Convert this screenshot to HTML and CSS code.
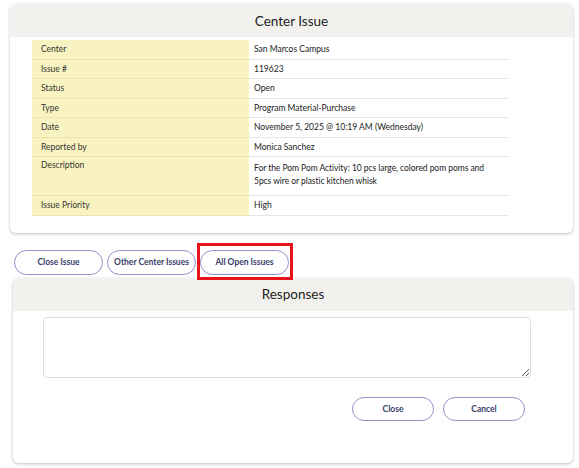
FILE: index.html
```html
<!DOCTYPE html>
<html>
<head>
<meta charset="utf-8">
<link rel="stylesheet" href="styles.css">
</head>
<body>
<div class="card issue-card">
  <div class="card-header">Center Issue</div>
  <div class="card-body">
    <div class="details">
      <div class="row"><div class="label">Center</div><div class="value">San Marcos Campus</div></div>
      <div class="row"><div class="label">Issue #</div><div class="value">119623</div></div>
      <div class="row"><div class="label">Status</div><div class="value">Open</div></div>
      <div class="row"><div class="label">Type</div><div class="value">Program Material-Purchase</div></div>
      <div class="row"><div class="label">Date</div><div class="value">November 5, 2025 @ 10:19 AM (Wednesday)</div></div>
      <div class="row"><div class="label">Reported by</div><div class="value">Monica Sanchez</div></div>
      <div class="row tall"><div class="label">Description</div><div class="value">For the Pom Pom Activity: 10 pcs large, colored pom poms and 5pcs wire or plastic kitchen whisk</div></div>
      <div class="row last"><div class="label">Issue Priority</div><div class="value">High</div></div>
    </div>
  </div>
</div>

<div class="actions">
  <button class="pill">Close Issue</button>
  <button class="pill">Other Center Issues</button>
  <button class="pill highlighted">All Open Issues</button>
</div>

<div class="card responses-card">
  <div class="card-header">Responses</div>
  <div class="responses-body">
    <textarea class="response-input"></textarea>
    <div class="form-actions">
      <button class="pill wide">Close</button>
      <button class="pill wide">Cancel</button>
    </div>
  </div>
</div>
</body>
</html>
```

FILE: styles.css
```css
html, body {
  margin: 0;
  padding: 0;
  background: #ffffff;
}

body {
  font-family: Lato, "Noto Sans", "Liberation Sans", sans-serif;
  color: #222;
  width: 579px;
  height: 468px;
  overflow: hidden;
}

.card {
  background: #fff;
  border-radius: 6px;
  box-shadow: 0 1px 3px rgba(60, 60, 90, 0.35);
  overflow: hidden;
}

.issue-card {
  margin: 4px 6px 0 10px;
}

.card-header {
  background: #f2f1ee;
  height: 33px;
  display: flex;
  align-items: center;
  justify-content: center;
  font-size: 13.5px;
  color: #1e1e1e;
}

.card-body {
  padding: 3px 64px 17px 22px;
}

.details {
  display: flex;
  flex-direction: column;
}

.row {
  display: grid;
  grid-template-columns: 217px 1fr;
  font-size: 8.5px;
  line-height: 11.5px;
}

.label {
  background: #f8f3c1;
  padding: 4px 9px 3px;
  color: #333;
  border-bottom: 1px solid #ebe3b0;
}

.value {
  padding: 4px 5px 3px;
  color: #222;
  border-bottom: 1px solid #e6e6e6;
}

.row.tall .label {
  padding-top: 3px;
  padding-bottom: 23.5px;
}

.row.tall .value {
  padding-top: 5px;
  padding-bottom: 8px;
  padding-right: 15px;
  line-height: 12.5px;
  letter-spacing: -0.05px;
}

.actions {
  display: flex;
  gap: 4px;
  margin: 17px 0 0 14px;
}

.pill {
  font-family: inherit;
  background: #fff;
  border: 1px solid #8f93c6;
  border-radius: 13px;
  height: 25px;
  width: 89px;
  padding: 0;
  font-size: 8.5px;
  font-weight: 700;
  color: #383d69;
  cursor: pointer;
}

.highlighted {
  position: relative;
}

.highlighted::after {
  content: "";
  position: absolute;
  left: -4px;
  right: -5px;
  top: -8px;
  bottom: -6px;
  border: 3px solid #e8141c;
  pointer-events: none;
}

.responses-card {
  margin: 3px 6px 0 13px;
}

.responses-body {
  padding: 6px 42px 42px 30px;
  display: flex;
  flex-direction: column;
}

.response-input {
  height: 61px;
  box-sizing: border-box;
  border: 1px solid #dedde3;
  border-radius: 4px;
  resize: vertical;
  margin: 0;
  font-family: inherit;
}

.form-actions {
  display: flex;
  justify-content: flex-end;
  gap: 9px;
  margin-top: 19px;
  padding-right: 6px;
}

.pill.wide {
  width: 82px;
  height: 24px;
}
```
